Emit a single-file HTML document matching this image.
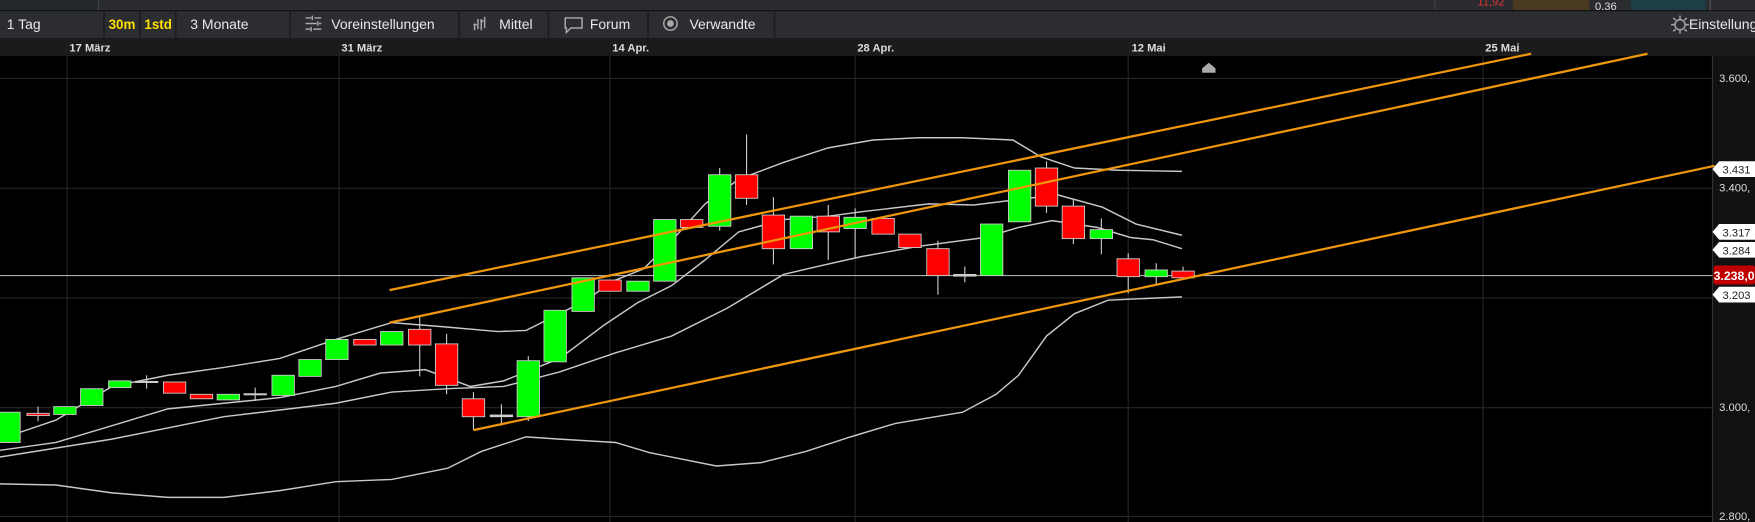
<!DOCTYPE html>
<html><head><meta charset="utf-8"><style>
html,body{margin:0;padding:0;background:#000;width:1755px;height:522px;overflow:hidden}
svg{display:block}
text{font-family:"Liberation Sans",Arial,sans-serif}
</style></head><body>
<svg width="1755" height="522" viewBox="0 0 1568 466" preserveAspectRatio="none" xmlns="http://www.w3.org/2000/svg">
<rect x="0" y="0" width="1568" height="466" fill="#000"/>
<!-- top bar -->
<rect x="0" y="0" width="1568" height="9" fill="#2a2c2f"/>
<rect x="0" y="0" width="88" height="9" fill="#25282b"/>
<line x1="88" y1="0" x2="88" y2="9" stroke="#444"/>
<line x1="1282" y1="0" x2="1282" y2="9" stroke="#444"/>
<text x="1320" y="5" font-size="10" fill="#d33">11,92</text>
<rect x="1352" y="0" width="68" height="9" fill="#4a3a22"/>
<text x="1425" y="9" font-size="10" fill="#ddd">0,36</text>
<rect x="1457" y="0" width="67" height="9" fill="#1c3e46"/>
<line x1="1528" y1="0" x2="1528" y2="9" stroke="#555"/>
<!-- toolbar -->
<rect x="0" y="9" width="1568" height="25" fill="#2b2d30"/>
<line x1="0" y1="9.5" x2="1568" y2="9.5" stroke="#111"/>
<g font-size="12.5" fill="#e8e8e8">
<text x="6" y="26">1 Tag</text>
<text x="97" y="26" font-size="12" fill="#ffe000" font-weight="bold">30m</text>
<text x="129" y="26" font-size="12" fill="#ffe000" font-weight="bold">1std</text>
<text x="170" y="26">3 Monate</text>
<text x="296" y="26">Voreinstellungen</text>
<text x="446" y="26">Mittel</text>
<text x="527" y="26">Forum</text>
<text x="616" y="26">Verwandte</text>
<text x="1509" y="26">Einstellungen</text>
</g>
<g stroke="#1c1d1f" stroke-width="1.5">
<line x1="93" y1="9" x2="93" y2="34"/><line x1="125" y1="9" x2="125" y2="34"/><line x1="157" y1="9" x2="157" y2="34"/><line x1="259" y1="9" x2="259" y2="34"/><line x1="410" y1="9" x2="410" y2="34"/><line x1="490" y1="9" x2="490" y2="34"/><line x1="579" y1="9" x2="579" y2="34"/><line x1="692" y1="9" x2="692" y2="34"/>
</g>
<!-- icons -->
<g stroke="#aaa" stroke-width="1.3" fill="none">
<path d="M273 16h5M281 16h6M273 21h10M285 21h2M273 26h4M280 26h7M279 14v4M284 19v4M278 24v4"/>
<path d="M424 27v-6M427 26v-9M430 27v-10M433 25v-10M423 22h3M429 19h3"/>
<path d="M505 16h15v9h-10l-4 4v-4h-1z"/>
<circle cx="599" cy="21" r="6"/>
<circle cx="1501" cy="22" r="4.5"/>
<path d="M1501 14v3M1501 27v3M1493 22h3M1506 22h3M1495 16l2 2M1505 26l2 2M1507 16l-2 2M1495 28l2-2"/>
</g>
<circle cx="599" cy="21" r="3" fill="#aaa"/>
<!-- date row -->
<rect x="0" y="34" width="1568" height="16" fill="#1b1b1b"/>
<g font-size="10" fill="#ddd" font-weight="bold">
<text x="62" y="46">17 März</text><text x="305" y="46">31 März</text><text x="547" y="46">14 Apr.</text><text x="766" y="46">28 Apr.</text><text x="1011" y="46">12 Mai</text><text x="1327" y="46">25 Mai</text>
</g>
<!-- grid -->
<g stroke="#262626" stroke-width="1">
<line x1="60" y1="50" x2="60" y2="466"/><line x1="303" y1="50" x2="303" y2="466"/><line x1="545" y1="50" x2="545" y2="466"/><line x1="764" y1="50" x2="764" y2="466"/><line x1="1008" y1="50" x2="1008" y2="466"/><line x1="1325" y1="50" x2="1325" y2="466"/>
<line x1="0" y1="70" x2="1530" y2="70"/><line x1="0" y1="168" x2="1530" y2="168"/><line x1="0" y1="266" x2="1530" y2="266"/><line x1="0" y1="364" x2="1530" y2="364"/><line x1="0" y1="461" x2="1530" y2="461"/>
</g>
<!-- axis -->
<rect x="1530" y="50" width="38" height="416" fill="#111"/>
<line x1="1530" y1="50" x2="1530" y2="466" stroke="#333"/>
<g font-size="10" fill="#ddd">
<text x="1536" y="73">3.600,</text><text x="1536" y="171">3.400,</text><text x="1536" y="367">3.000,</text><text x="1536" y="464">2.800,</text>
</g>
<path d="M1080 56l-6 5v4h12v-4z" fill="#aaa"/>
<!-- current price line -->
<line x1="0" y1="246" x2="1530" y2="246" stroke="#aaa" stroke-width="1"/>
<!-- bands -->
<g fill="none" stroke="#c8c8c8" stroke-width="1.3">
<polyline points="0,392 50,375 100,345 150,335 200,328 250,320 300,303 350,288 400,292 445,296 470,295 500,280 520,270 550,250 575,240 600,215 630,182 660,160 700,145 740,132 780,125 820,123 860,123 905,125 930,140 960,150 1000,152 1056,153"/>
<polyline points="0,402 50,395 100,380 150,365 200,360 250,355 300,345 340,333 380,330 420,345 450,340 500,320 540,290 570,270 600,255 630,232 660,207 700,196 740,193 770,189 830,182 870,183 910,178 945,174 985,185 1015,200 1056,210"/>
<polyline points="0,408 100,392 200,372 300,360 350,350 400,347 450,345 500,332 550,315 600,300 650,275 700,245 730,238 770,229 820,220 880,212 910,203 940,197 980,203 1010,212 1030,214 1056,222"/>
<polyline points="0,432 50,433 100,440 150,444 200,444 250,438 300,430 350,428 400,418 430,403 470,390 500,392 550,395 580,404 600,408 640,416 680,413 720,403 760,390 800,378 860,368 890,352 910,335 935,300 960,280 990,268 1056,265"/>
</g>
<!-- candles -->
<g stroke="#ccc" stroke-width="1">
<line x1="34" y1="363" x2="34" y2="376"/><line x1="375" y1="283" x2="375" y2="336"/><line x1="399" y1="298" x2="399" y2="352"/><line x1="423" y1="350" x2="423" y2="384"/><line x1="448" y1="361" x2="448" y2="380"/><line x1="472" y1="318" x2="472" y2="376"/><line x1="643" y1="150" x2="643" y2="206"/><line x1="667" y1="120" x2="667" y2="183"/><line x1="691" y1="176" x2="691" y2="236"/><line x1="740" y1="183" x2="740" y2="232"/><line x1="764" y1="186" x2="764" y2="230"/><line x1="838" y1="215" x2="838" y2="263"/><line x1="862" y1="238" x2="862" y2="252"/><line x1="935" y1="144" x2="935" y2="190"/><line x1="959" y1="178" x2="959" y2="218"/><line x1="984" y1="195" x2="984" y2="227"/><line x1="1008" y1="226" x2="1008" y2="262"/><line x1="1033" y1="235" x2="1033" y2="255"/><line x1="1057" y1="238" x2="1057" y2="250"/><line x1="131" y1="335" x2="131" y2="347"/><line x1="228" y1="346" x2="228" y2="358"/>
</g>
<g stroke="#ccc" stroke-width="0.8">
<rect x="-2" y="368" width="20" height="27" fill="#00ff00"/>
<rect x="24" y="369" width="20" height="2" fill="#ff0000"/>
<rect x="48" y="363" width="20" height="7" fill="#00ff00"/>
<rect x="72" y="347" width="20" height="15" fill="#00ff00"/>
<rect x="97" y="340" width="20" height="6" fill="#00ff00"/>
<rect x="121" y="340.5" width="20" height="1" fill="#ccc"/>
<rect x="146" y="341" width="20" height="10" fill="#ff0000"/>
<rect x="170" y="352" width="20" height="4" fill="#ff0000"/>
<rect x="194" y="352" width="20" height="5" fill="#00ff00"/>
<rect x="218" y="351.5" width="20" height="1" fill="#ccc"/>
<rect x="243" y="335" width="20" height="18" fill="#00ff00"/>
<rect x="267" y="321" width="20" height="15" fill="#00ff00"/>
<rect x="291" y="303" width="20" height="18" fill="#00ff00"/>
<rect x="316" y="303" width="20" height="5" fill="#ff0000"/>
<rect x="340" y="296" width="20" height="12" fill="#00ff00"/>
<rect x="365" y="294" width="20" height="14" fill="#ff0000"/>
<rect x="389" y="307" width="20" height="37" fill="#ff0000"/>
<rect x="413" y="356" width="20" height="16" fill="#ff0000"/>
<rect x="438" y="370.5" width="20" height="1.5" fill="#ccc"/>
<rect x="462" y="322" width="20" height="50" fill="#00ff00"/>
<rect x="486" y="277" width="20" height="46" fill="#00ff00"/>
<rect x="511" y="248" width="20" height="30" fill="#00ff00"/>
<rect x="535" y="250" width="20" height="10" fill="#ff0000"/>
<rect x="560" y="251" width="20" height="9" fill="#00ff00"/>
<rect x="584" y="196" width="20" height="55" fill="#00ff00"/>
<rect x="608" y="196" width="20" height="7" fill="#ff0000"/>
<rect x="633" y="156" width="20" height="46" fill="#00ff00"/>
<rect x="657" y="156" width="20" height="21" fill="#ff0000"/>
<rect x="681" y="192" width="20" height="30" fill="#ff0000"/>
<rect x="706" y="193" width="20" height="29" fill="#00ff00"/>
<rect x="730" y="193" width="20" height="14" fill="#ff0000"/>
<rect x="754" y="194" width="20" height="10" fill="#00ff00"/>
<rect x="779" y="195" width="20" height="14" fill="#ff0000"/>
<rect x="803" y="209" width="20" height="12" fill="#ff0000"/>
<rect x="828" y="222" width="20" height="24" fill="#ff0000"/>
<rect x="852" y="245" width="20" height="1.5" fill="#ccc"/>
<rect x="876" y="200" width="20" height="46" fill="#00ff00"/>
<rect x="901" y="152" width="20" height="46" fill="#00ff00"/>
<rect x="925" y="150" width="20" height="34" fill="#ff0000"/>
<rect x="949" y="184" width="20" height="29" fill="#ff0000"/>
<rect x="974" y="205" width="20" height="8" fill="#00ff00"/>
<rect x="998" y="231" width="20" height="16" fill="#ff0000"/>
<rect x="1023" y="241" width="20" height="6" fill="#00ff00"/>
<rect x="1047" y="242" width="20" height="6" fill="#ff0000"/>
</g>
<!-- trend lines -->
<g stroke="#f0960a" stroke-width="2" fill="none">
<line x1="348" y1="259" x2="1368" y2="48"/>
<line x1="348" y1="288" x2="1472" y2="48"/>
<line x1="423" y1="384" x2="1532" y2="148"/>
</g>
<!-- axis labels -->
<g font-size="10">
<path d="M1530 151l6-7h32v14h-32z" fill="#fff"/><text x="1539" y="155" fill="#222">3.431</text>
<path d="M1530 207l6-7h32v14h-32z" fill="#fff"/><text x="1539" y="211" fill="#222">3.317</text>
<path d="M1530 223l6-7h32v14h-32z" fill="#fff"/><text x="1539" y="227" fill="#222">3.284</text>
<rect x="1531" y="237" width="37" height="17" rx="2" fill="#c00000"/><text x="1531" y="250" fill="#fff" font-weight="bold" font-size="11">3.238,0</text>
<path d="M1530 263l6-7h32v14h-32z" fill="#fff"/><text x="1539" y="267" fill="#222">3.203</text>
</g>
</svg>
</body></html>
